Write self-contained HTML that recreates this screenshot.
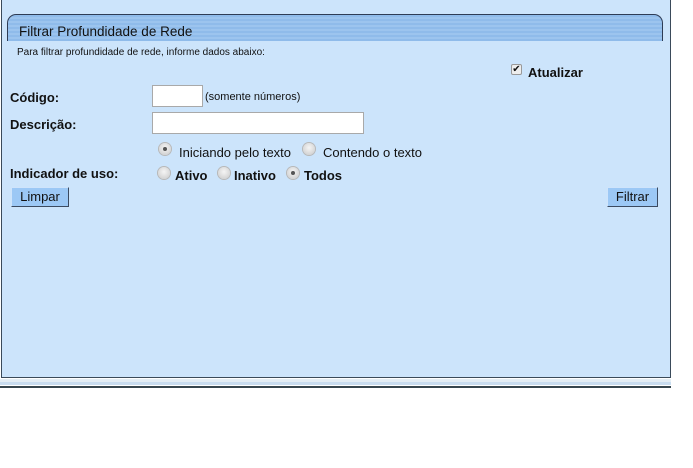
<!DOCTYPE html>
<html><head><meta charset="utf-8"><style>
*{margin:0;padding:0;box-sizing:border-box}
body{width:693px;height:468px;background:#fff;position:relative;overflow:hidden;font-family:"Liberation Sans",Arial,sans-serif;color:#111}
.a{position:absolute;white-space:nowrap}
#panel{position:absolute;left:1px;top:-2px;width:670px;height:380px;background:#cce4fb;border:1px solid #3a4a5a;border-top:none}
#hdr{position:absolute;left:7px;top:14px;width:656px;height:27px;border:1px solid #2e3c55;border-bottom:none;border-radius:9px 9px 0 0;background:repeating-linear-gradient(#8fbbea 0,#8fbbea 2px,#9cc4ee 2px,#9cc4ee 4px)}
.b{font-weight:bold;font-size:13px}
.r{position:absolute;width:12px;height:12px;border-radius:50%;background:radial-gradient(circle at 50% 40%,#f5f5f5,#c8c8c8);box-shadow:0 0 0 1px #b8b8b8}
.r.on::after{content:"";position:absolute;left:4px;top:4px;width:4px;height:4px;border-radius:50%;background:#555}
.in{position:absolute;background:#fff;border:1px solid #a9a9a9}
.btn{position:absolute;background:#9cc8f5;border:1px solid #3b4a60;border-top-color:#cfe4fb;border-left-color:#cfe4fb;font-size:13px;text-align:center;line-height:17px}
</style></head><body>
<div id="panel"></div>
<div id="hdr"></div>
<div class="a" style="left:19px;top:24px;font-size:13.5px;color:#111">Filtrar Profundidade de Rede</div>
<div class="a" style="left:17px;top:47px;font-size:10px">Para filtrar profundidade de rede, informe dados abaixo:</div>
<div class="a" style="left:511px;top:64px;width:11px;height:11px;background:#eee;border:1px solid #999;border-radius:2px;font-size:10px;line-height:9px;text-align:center">✔</div>
<div class="a b" style="left:528px;top:65px">Atualizar</div>
<div class="a b" style="left:10px;top:90px">Código:</div>
<div class="in" style="left:152px;top:85px;width:51px;height:22px"></div>
<div class="a" style="left:205px;top:91px;font-size:11px">(somente números)</div>
<div class="a b" style="left:10px;top:117px">Descrição:</div>
<div class="in" style="left:152px;top:112px;width:212px;height:22px"></div>
<div class="r on" style="left:159px;top:143px"></div>
<div class="a" style="left:179px;top:145px;font-size:13px">Iniciando pelo texto</div>
<div class="r" style="left:303px;top:143px"></div>
<div class="a" style="left:323px;top:145px;font-size:13px">Contendo o texto</div>
<div class="a b" style="left:10px;top:166px">Indicador de uso:</div>
<div class="r" style="left:158px;top:167px"></div>
<div class="a b" style="left:175px;top:168px">Ativo</div>
<div class="r" style="left:218px;top:167px"></div>
<div class="a b" style="left:234px;top:168px">Inativo</div>
<div class="r on" style="left:287px;top:167px"></div>
<div class="a b" style="left:304px;top:168px">Todos</div>
<div class="btn" style="left:11px;top:187px;width:58px;height:20px">Limpar</div>
<div class="btn" style="left:607px;top:187px;width:51px;height:20px">Filtrar</div>
<div class="a" style="left:0;top:379px;width:671px;height:3px;background:#e4eef5"></div>
<div class="a" style="left:0;top:382px;width:671px;height:3px;background:#c9ddf0"></div>
<div class="a" style="left:0;top:386px;width:671px;height:2px;background:#37474f"></div>
</body></html>
